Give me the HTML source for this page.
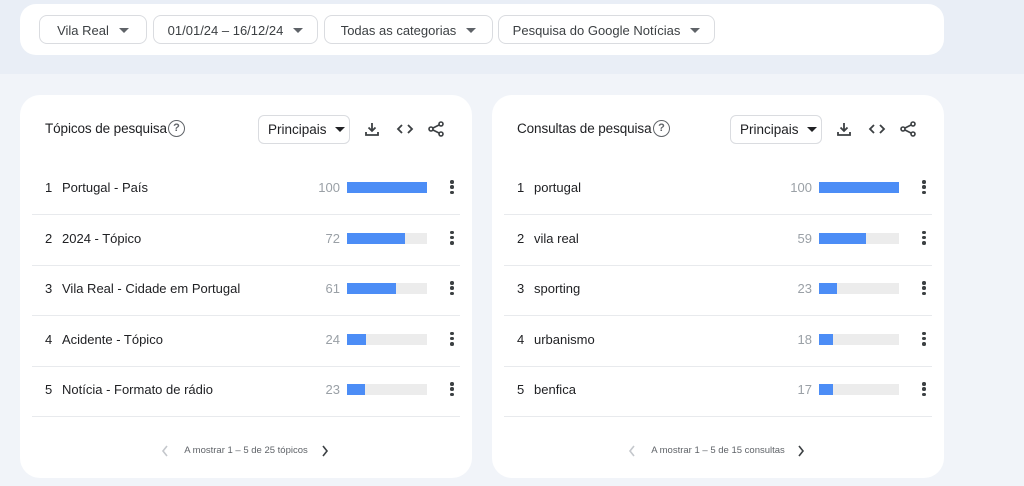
<!DOCTYPE html><html><head><style>
body{margin:0;width:1024px;height:486px;overflow:hidden;font-family:"Liberation Sans",sans-serif;background:#f1f4f9;position:relative;color:#202124}
.band{position:absolute;left:0;top:0;width:1024px;height:74px;background:#e9eef6}
.top{position:absolute;left:20px;top:4px;width:924px;height:51px;background:#fff;border-radius:16px}
.pill{position:absolute;top:11px;height:29px;border:1px solid #dadce0;border-radius:8px;font-size:13px;line-height:29px;text-align:center;box-sizing:border-box;color:#3c4043}
.tri{display:inline-block;width:0;height:0;border-left:5px solid transparent;border-right:5px solid transparent;border-top:5px solid #5f6368;margin-left:10px;vertical-align:2px}
.card{position:absolute;top:95px;width:452px;height:383px;background:#fff;border-radius:20px}
.title{position:absolute;left:25px;top:26px;font-size:13.5px;letter-spacing:-0.1px}
.q{position:absolute;top:25px;width:15px;height:15px;border:1.6px solid #5f6368;border-radius:50%;font-size:11px;font-weight:bold;text-align:center;line-height:15px;color:#5f6368}
.dd{position:absolute;left:238px;top:20px;width:92px;height:29px;border:1px solid #dadce0;border-radius:6px;box-sizing:border-box;font-size:13.5px;line-height:27px;padding-left:9px;white-space:nowrap}
.dd .tri{border-top-color:#202124;margin-left:8px}
.ic{position:absolute;top:26px}
.row{position:absolute;left:12px;width:428px;height:50px;border-bottom:1.5px solid #e8eaed;font-size:13px}
.row .n{position:absolute;left:13px;top:16px}
.row .t{position:absolute;left:30px;top:16px}
.row .v{position:absolute;right:120px;top:16px;color:#9aa0a6}
.row .b{position:absolute;left:315px;top:18px;width:80px;height:11px;background:#ececec}
.row .b i{display:block;height:100%;background:#4c8df6}
.dots{position:absolute;left:418px;top:16px;width:4px}
.dots span{display:block;width:3.5px;height:3.5px;background:#3c4043;border-radius:50%;margin-bottom:1.8px}
.ft{position:absolute;top:350px;width:100%;text-align:center;font-size:9.5px;color:#5f6368}
.ch{position:absolute;top:0}
</style></head><body>
<div class="band"></div>
<div class="top">
<div class="pill" style="left:19px;width:108px">Vila Real<span class="tri"></span></div>
<div class="pill" style="left:133px;width:165px">01/01/24 – 16/12/24<span class="tri"></span></div>
<div class="pill" style="left:304px;width:169px">Todas as categorias<span class="tri"></span></div>
<div class="pill" style="left:478px;width:217px">Pesquisa do Google Notícias<span class="tri"></span></div>
</div>

<div class="card" style="left:20px" id="c1"></div>
<div class="card" style="left:492px" id="c2"></div>
<script>
function build(id,title,qx,rows,foot,fl,fr){
var c=document.getElementById(id);var h='<div class="title">'+title+'</div><div class="q" style="left:'+qx+'px">?</div><div class="dd">Principais<span class="tri"></span></div>';
h+='<svg class="ic" style="left:344px" width="16" height="16" viewBox="0 0 16 16"><path d="M8 2v8M4.5 6.5L8 10l3.5-3.5M2 11v3h12v-3" fill="none" stroke="#3c4043" stroke-width="1.8"/></svg>';
h+='<svg class="ic" style="left:376px" width="18" height="16" viewBox="0 0 18 16"><path d="M6 4L2 8l4 4M12 4l4 4-4 4" fill="none" stroke="#3c4043" stroke-width="1.8"/></svg>';
h+='<svg class="ic" style="left:408px" width="16" height="16" viewBox="0 0 16 16"><circle cx="13" cy="3" r="2" fill="none" stroke="#3c4043" stroke-width="1.6"/><circle cx="3" cy="8" r="2" fill="none" stroke="#3c4043" stroke-width="1.6"/><circle cx="13" cy="13" r="2" fill="none" stroke="#3c4043" stroke-width="1.6"/><path d="M5 7l6-3M5 9l6 3" stroke="#3c4043" stroke-width="1.6"/></svg>';
rows.forEach(function(r,i){h+='<div class="row" style="top:'+(69+i*50.5)+'px"><span class="n">'+(i+1)+'</span><span class="t">'+r[0]+'</span><span class="v">'+r[1]+'</span><div class="b"><i style="width:'+(r[1]*0.8)+'px"></i></div><div class="dots"><span></span><span></span><span></span></div></div>';});
h+='<div class="ft"><svg class="ch" style="left:'+fl+'px" width="8" height="12" viewBox="0 0 8 12"><path d="M6 1L2 6l4 5" fill="none" stroke="#c4c7cc" stroke-width="1.6"/></svg>'+foot+'<svg class="ch" style="left:'+fr+'px" width="8" height="12" viewBox="0 0 8 12"><path d="M2 1l4 5-4 5" fill="none" stroke="#3c4043" stroke-width="1.6"/></svg></div>';
c.innerHTML=h;}
build('c1','Tópicos de pesquisa',148,[['Portugal - País',100],['2024 - Tópico',72],['Vila Real - Cidade em Portugal',61],['Acidente - Tópico',24],['Notícia - Formato de rádio',23]],'A mostrar 1 – 5 de 25 tópicos',141,301);
build('c2','Consultas de pesquisa',161,[['portugal',100],['vila real',59],['sporting',23],['urbanismo',18],['benfica',17]],'A mostrar 1 – 5 de 15 consultas',136,305);
</script>
</body></html>
